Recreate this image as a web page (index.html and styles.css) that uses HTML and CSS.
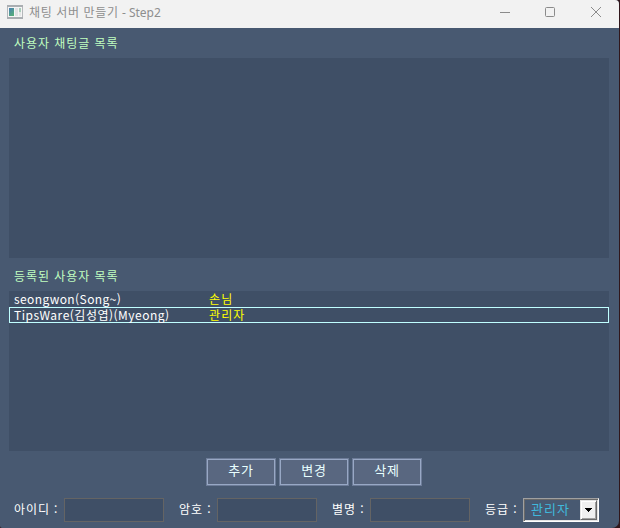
FILE: index.html
```html
<!DOCTYPE html>
<html lang="ko">
<head>
<meta charset="utf-8">
<title>채팅 서버 만들기 - Step2</title>
<link rel="stylesheet" href="styles.css">
</head>
<body>
<div class="window">
  <header class="titlebar">
    <svg class="app-icon" width="16" height="14" viewBox="0 0 16 14">
      <defs><linearGradient id="pane" x1="0" y1="0" x2=".6" y2="1"><stop offset="0" stop-color="#4a7fb5"/><stop offset="1" stop-color="#55ac7c"/></linearGradient></defs>
      <rect x=".5" y=".5" width="15" height="13" fill="#f5f5f5" stroke="#b4b7ba"/>
      <path d="M0 1h16M0 13h16" stroke="#aaaeb2" stroke-width="2"/>
      <rect x="2" y="3" width="5" height="8" fill="url(#pane)"/>
      <rect x="8" y="3" width="3" height="8" fill="#e0e2e4"/>
      <rect x="12" y="3" width="2" height="4" fill="#a9cdbb"/>
      <rect x="12" y="7" width="2" height="4" fill="#e4e7e6"/>
    </svg>
    <h1 class="title"><span class="title-ko">채팅 서버 만들기</span> - Step2</h1>
    <svg class="controls" width="102" height="12" viewBox="0 0 102 12" fill="none" stroke="#8b8b8b">
      <path d="M0 6.5h10"/>
      <rect x="45.5" y="1.5" width="9" height="9" rx="1"/>
      <path d="M91 1l10 10M101 1L91 11"/>
    </svg>
  </header>
  <main class="content">
    <h2 class="label first">사용자 채팅글 목록</h2>
    <div class="list chat"></div>
    <h2 class="label second">등록된 사용자 목록</h2>
    <div class="list users">
      <div class="row"><span class="name short">seongwon(Song~)</span><span class="grade">손님</span></div>
      <div class="row selected"><span class="name">TipsWare(김성엽)(Myeong)</span><span class="grade">관리자</span></div>
    </div>
    <div class="buttons">
      <button>추가</button><button>변경</button><button>삭제</button>
    </div>
    <div class="form">
      <label class="id">아이디 :</label><input type="text">
      <label>암호 :</label><input type="text">
      <label>별명 :</label><input type="text">
      <label>등급 :</label>
      <div class="combo"><span>관리자</span><i class="drop"><svg width="7" height="4" viewBox="0 0 7 4" shape-rendering="crispEdges"><path d="M0 0h7v1H6v1H5v1H4v1H3V3H2V2H1V1H0z"/></svg></i></div>
    </div>
  </main>
</div>
</body>
</html>
```
FILE: styles.css
```css
* { box-sizing: border-box; }
body {
  margin: 0;
  background: #30161b;
  font: 12px/16px "Noto Sans CJK KR", sans-serif;
  overflow: hidden;
}
.window {
  width: 619px;
  height: 528px;
  background: #485971;
  border-radius: 0 4px 7px 2px;
  overflow: hidden;
}
.titlebar {
  display: flex;
  align-items: flex-start;
  height: 28px;
  padding: 5px 17px 0 7px;
  background: #f2f2f2;
}
.app-icon { display: block; }
.title {
  margin: 0 auto 0 6px;
  font: 12px/16px "Noto Sans", "Noto Sans CJK KR", sans-serif;
  color: #8e8e8e;
  white-space: nowrap;
}
.title-ko { letter-spacing: .7px; }
.controls { display: block; margin-top: 1px; }
.content { padding: 0 10px 0 9px; }
.label {
  margin: 0;
  padding-left: 5px;
  font-size: 12px;
  font-weight: 400;
  color: #c0ffc0;
  letter-spacing: .95px;
}
.first { height: 30px; padding-top: 7px; }
.second { height: 33px; padding-top: 10px; }
.list { background: #3f4f66; }
.chat { height: 200px; }
.users { height: 160px; }
.row {
  display: flex;
  height: 16px;
  padding-left: 5px;
  line-height: 16px;
  color: #fff;
  white-space: nowrap;
}
.row .name { width: 195px; letter-spacing: .5px; }
.row .short { letter-spacing: .42px; }
.grade { color: #ff0; letter-spacing: 1.1px; }
.selected { padding-left: 4px; border: 1px solid #c0ffff; line-height: 14px; }
.buttons {
  display: flex;
  gap: 3px;
  margin: 7px 0 0 197px;
}
button {
  width: 70px;
  height: 28px;
  padding: 0 0 5px;
  border: 1px solid #6d7c98;
  box-shadow: inset 0 0 0 1px #98a8c5;
  background: #596780;
  color: #e8ffff;
  font: 13px/20px "Noto Sans CJK KR", sans-serif;
  letter-spacing: .8px;
}
.form {
  display: flex;
  height: 24px;
  margin-top: 12px;
  padding-left: 5px;
}
.form label {
  width: 38px;
  margin: 3px 0 0 15px;
  color: #fff;
  letter-spacing: .9px;
  white-space: nowrap;
}
.form .id { width: 50px; margin-left: 0; }
.form input {
  width: 100px;
  height: 24px;
  padding: 2px 4px;
  border: 1px solid #646464;
  border-radius: 0;
  background: #3f4f66;
  color: #fff;
}
.combo {
  display: flex;
  justify-content: space-between;
  width: 76px;
  height: 24px;
  padding: 0 1px 0 7px;
  border: 1px solid;
  border-color: #a0a0a0 #fff #fff #a0a0a0;
  box-shadow: inset 1px 1px #696969, inset -1px -1px #e3e3e3;
  color: #40b8dc;
  font-size: 13px;
  line-height: 19px;
  letter-spacing: 1px;
}
.drop {
  display: flex;
  align-items: center;
  justify-content: center;
  width: 17px;
  height: 20px;
  margin-top: 1px;
  background: #f0f0f0;
  border: 1px solid;
  border-color: #e3e3e3 #696969 #696969 #e3e3e3;
  box-shadow: inset 1px 1px #fff, inset -1px -1px #a0a0a0;
}
```
